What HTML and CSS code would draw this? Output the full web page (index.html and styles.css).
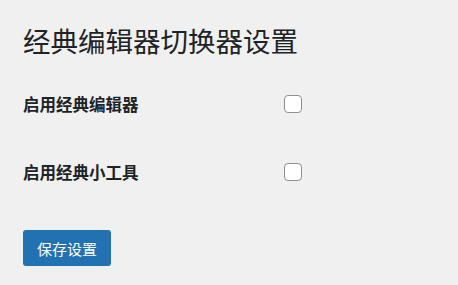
FILE: index.html
```html
<!DOCTYPE html>
<html lang="zh-CN">
<head>
<meta charset="utf-8">
<link rel="stylesheet" href="styles.css">
</head>
<body>
<div class="wrap">
  <h1 class="title">经典编辑器切换器设置</h1>
  <form class="settings">
    <div class="row">
      <label class="label" for="c1">启用经典编辑器</label>
      <input class="check" type="checkbox" id="c1">
    </div>
    <div class="row">
      <label class="label" for="c2">启用经典小工具</label>
      <input class="check" type="checkbox" id="c2">
    </div>
    <button class="btn" type="button">保存设置</button>
  </form>
</div>
</body>
</html>
```
FILE: styles.css
```css
html, body {
  margin: 0;
  padding: 0;
  background: #f0f0f1;
  color: #1d2327;
  font-family: "Noto Sans CJK SC", "Noto Sans", sans-serif;
}
.wrap {
  padding: 23px 0 0 23px;
}
.title {
  margin: 0;
  font-size: 27.5px;
  font-weight: 400;
  line-height: 34px;
  color: #1d2327;
}
.settings {
  display: flex;
  flex-direction: column;
  align-items: flex-start;
  padding-top: 13px;
}
.row {
  display: grid;
  grid-template-columns: 261px 18px;
  align-items: center;
  height: 68px;
}
.label {
  font-size: 16.5px;
  font-weight: 700;
  color: #1d2327;
}
.check {
  appearance: none;
  -webkit-appearance: none;
  width: 18px;
  height: 18px;
  margin: 0;
  border: 1px solid #8c8f94;
  border-radius: 4px;
  background: #fff;
  box-sizing: border-box;
}
.btn {
  margin-top: 24px;
  width: 88px;
  height: 36px;
  border: 0;
  border-radius: 3px;
  background: #2271b1;
  color: #fff;
  font-family: inherit;
  font-size: 15px;
  padding: 0;
}
```
